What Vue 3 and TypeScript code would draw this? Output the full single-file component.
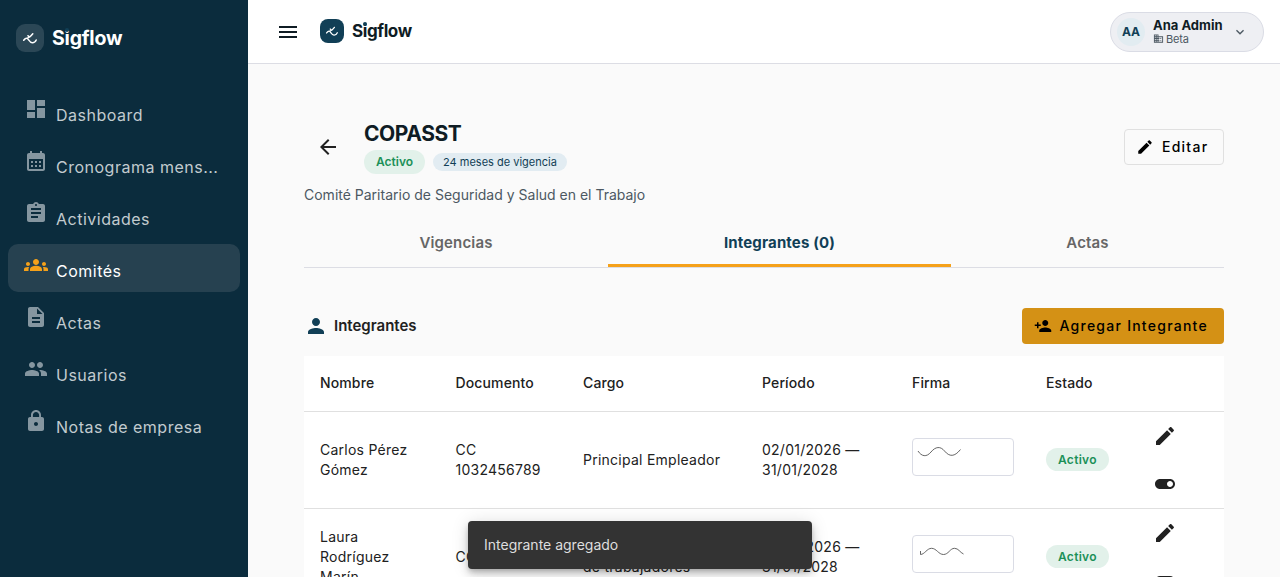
<script setup lang="ts">
interface NavItem {
  label: string
  icon: string
  active?: boolean
}
interface Member {
  name: string
  doc: string
  role: string
  period: string
  sign: string
}

const icons: Record<string, string> = {
  dashboard: 'M3 13h8V3H3v10zm0 8h8v-6H3v6zm10 0h8V11h-8v10zm0-18v6h8V3h-8z',
  calendar:
    'M19 4h-1V2h-2v2H8V2H6v2H5c-1.11 0-1.99.9-1.99 2L3 20c0 1.1.89 2 2 2h14c1.1 0 2-.9 2-2V6c0-1.1-.9-2-2-2zm0 16H5V10h14v10zM9 14H7v-2h2v2zm4 0h-2v-2h2v2zm4 0h-2v-2h2v2zm-8 4H7v-2h2v2zm4 0h-2v-2h2v2zm4 0h-2v-2h2v2z',
  assignment:
    'M19 3h-4.18C14.4 1.84 13.3 1 12 1c-1.3 0-2.4.84-2.82 2H5c-1.1 0-2 .9-2 2v14c0 1.1.9 2 2 2h14c1.1 0 2-.9 2-2V5c0-1.1-.9-2-2-2zm-7 0c.55 0 1 .45 1 1s-.45 1-1 1-1-.45-1-1 .45-1 1-1zm2 14H7v-2h7v2zm3-4H7v-2h10v2zm0-4H7V7h10v2z',
  groups:
    'M12 12.75c1.63 0 3.07.39 4.24.9 1.08.48 1.76 1.56 1.76 2.73V18H6v-1.61c0-1.18.68-2.26 1.76-2.73 1.17-.52 2.61-.91 4.24-.91zM4 13c1.1 0 2-.9 2-2s-.9-2-2-2-2 .9-2 2 .9 2 2 2zm1.13 1.1c-.37-.06-.74-.1-1.13-.1-.99 0-1.93.21-2.78.58C.48 14.9 0 15.62 0 16.43V18h4.5v-1.61c0-.83.23-1.61.63-2.29zM20 13c1.1 0 2-.9 2-2s-.9-2-2-2-2 .9-2 2 .9 2 2 2zm4 3.43c0-.81-.48-1.53-1.22-1.85-.85-.37-1.79-.58-2.78-.58-.39 0-.76.04-1.13.1.4.68.63 1.46.63 2.29V18H24v-1.57zM12 6c1.66 0 3 1.34 3 3s-1.34 3-3 3-3-1.34-3-3 1.34-3 3-3z',
  description:
    'M14 2H6c-1.1 0-1.99.9-1.99 2L4 20c0 1.1.89 2 1.99 2H18c1.1 0 2-.9 2-2V8l-6-6zm2 16H8v-2h8v2zm0-4H8v-2h8v2zm-3-5V3.5L18.5 9H13z',
  people:
    'M16 11c1.66 0 2.99-1.34 2.99-3S17.66 5 16 5c-1.66 0-3 1.34-3 3s1.34 3 3 3zm-8 0c1.66 0 2.99-1.34 2.99-3S9.66 5 8 5C6.34 5 5 6.34 5 8s1.34 3 3 3zm0 2c-2.33 0-7 1.17-7 3.5V19h14v-2.5c0-2.33-4.67-3.5-7-3.5zm8 0c-.29 0-.62.02-.97.05 1.16.84 1.97 1.97 1.97 3.45V19h6v-2.5c0-2.33-4.67-3.5-7-3.5z',
  lock: 'M18 8h-1V6c0-2.76-2.24-5-5-5S7 3.24 7 6v2H6c-1.1 0-2 .9-2 2v10c0 1.1.9 2 2 2h12c1.1 0 2-.9 2-2V10c0-1.1-.9-2-2-2zm-6 9c-1.1 0-2-.9-2-2s.9-2 2-2 2 .9 2 2-.9 2-2 2zm3.1-9H8.9V6c0-1.71 1.39-3.1 3.1-3.1 1.71 0 3.1 1.39 3.1 3.1v2z',
  menu: 'M3 18h18v-2H3v2zm0-5h18v-2H3v2zm0-7v2h18V6H3z',
  business:
    'M12 7V3H2v18h20V7H12zM6 19H4v-2h2v2zm0-4H4v-2h2v2zm0-4H4V9h2v2zm0-4H4V5h2v2zm4 12H8v-2h2v2zm0-4H8v-2h2v2zm0-4H8V9h2v2zm0-4H8V5h2v2zm10 12h-8v-2h2v-2h-2v-2h2v-2h-2V9h8v10zm-2-8h-2v2h2v-2zm0 4h-2v2h2v-2z',
  expand: 'M16.59 8.59L12 13.17 7.41 8.59 6 10l6 6 6-6z',
  back: 'M20 11H7.83l5.59-5.59L12 4l-8 8 8 8 1.41-1.41L7.83 13H20v-2z',
  edit: 'M3 17.25V21h3.75L17.81 9.94l-3.75-3.75L3 17.25zM20.71 7.04c.39-.39.39-1.02 0-1.41l-2.34-2.34c-.39-.39-1.02-.39-1.41 0l-1.83 1.83 3.75 3.75 1.83-1.83z',
  person:
    'M12 12c2.21 0 4-1.79 4-4s-1.79-4-4-4-4 1.79-4 4 1.79 4 4 4zm0 2c-2.67 0-8 1.34-8 4v2h16v-2c0-2.66-5.33-4-8-4z',
  personAdd:
    'M15 12c2.21 0 4-1.79 4-4s-1.79-4-4-4-4 1.79-4 4 1.79 4 4 4zm-9-2V7H4v3H1v2h3v3h2v-3h3v-2H6zm9 4c-2.67 0-8 1.34-8 4v2h16v-2c0-2.66-5.33-4-8-4z',
  toggle:
    'M17 7H7c-2.76 0-5 2.24-5 5s2.24 5 5 5h10c2.76 0 5-2.24 5-5s-2.24-5-5-5zm0 8c-1.66 0-3-1.34-3-3s1.34-3 3-3 3 1.34 3 3-1.34 3-3 3z',
}

const logoPath =
  'M7.700 16.300C9 14.500 10 14 11 14.300C12.800 14.800 13.200 18.500 16.300 18.700C18.400 18.800 19.500 17.600 20.200 16M12 11.700C13.200 13.200 14.200 12.800 15 11.800L16.800 9.700M11 14.300L14.200 12.700'

const nav: NavItem[] = [
  { label: 'Dashboard', icon: 'dashboard' },
  { label: 'Cronograma mens...', icon: 'calendar' },
  { label: 'Actividades', icon: 'assignment' },
  { label: 'Comités', icon: 'groups', active: true },
  { label: 'Actas', icon: 'description' },
  { label: 'Usuarios', icon: 'people' },
  { label: 'Notas de empresa', icon: 'lock' },
]

const columns: string[] = ['Nombre', 'Documento', 'Cargo', 'Período', 'Firma', 'Estado', '']

const members: Member[] = [
  {
    name: 'Carlos Pérez Gómez',
    doc: 'CC 1032456789',
    role: 'Principal Empleador',
    period: '02/01/2026 — 31/01/2028',
    sign: 'M5 12C8.500 17.500 13.500 18.500 18 13C22.500 7.500 27.500 7 31.500 12C36.500 18 41.500 18 47.500 10.500',
  },
  {
    name: 'Laura Rodríguez Marín',
    doc: 'CC 52345678',
    role: 'Representante\nde trabajadores',
    period: '02/01/2026 — 31/01/2028',
    sign: 'M7.500 15V18.500C11.500 18.500 14 12.300 18.500 12.300C23.500 12.300 25.500 18.500 30.500 18.500C35.500 18.500 37 12.300 41.500 12.300C45.500 12.300 47 16.500 50.500 18',
  },
]
</script>

<template>
  <div class="app">
    <aside class="sidebar">
      <div class="brand">
        <span class="mark">
          <svg viewBox="0 0 28 28"><path :d="logoPath" /></svg>
        </span>
        <span class="word">Sigflow</span>
      </div>
      <nav>
        <a v-for="n in nav" :key="n.label" class="item" :class="{ active: n.active }">
          <svg class="icon" viewBox="0 0 24 24"><path :d="icons[n.icon]" /></svg>
          <span>{{ n.label }}</span>
        </a>
      </nav>
    </aside>

    <div class="main">
      <header class="topbar">
        <svg class="icon menu" viewBox="0 0 24 24"><path :d="icons.menu" /></svg>
        <div class="brand small">
          <span class="mark">
            <svg viewBox="0 0 28 28"><path :d="logoPath" /></svg>
          </span>
          <span class="word">Sigflow</span>
        </div>
        <div class="user">
          <span class="avatar">AA</span>
          <div class="who">
            <strong>Ana Admin</strong>
            <span class="org"><svg viewBox="0 0 24 24"><path :d="icons.business" /></svg>Beta</span>
          </div>
          <svg class="chev" viewBox="0 0 24 24"><path :d="icons.expand" /></svg>
        </div>
      </header>

      <section class="page">
        <div class="head">
          <svg class="icon back" viewBox="0 0 24 24"><path :d="icons.back" /></svg>
          <div class="titles">
            <h1>COPASST</h1>
            <div class="chips">
              <span class="chip ok">Activo</span>
              <span class="chip info">24 meses de vigencia</span>
            </div>
          </div>
          <button class="btn outline">
            <svg viewBox="0 0 24 24"><path :d="icons.edit" /></svg><span>Editar</span>
          </button>
        </div>
        <p class="desc">Comité Paritario de Seguridad y Salud en el Trabajo</p>

        <div class="tabs">
          <div class="tab">Vigencias</div>
          <div class="tab on">Integrantes (0)</div>
          <div class="tab">Actas</div>
        </div>

        <div class="section">
          <svg class="icon" viewBox="0 0 24 24"><path :d="icons.person" /></svg>
          <h2>Integrantes</h2>
          <button class="btn add">
            <svg viewBox="0 0 24 24"><path :d="icons.personAdd" /></svg><span>Agregar Integrante</span>
          </button>
        </div>

        <div class="table">
          <div class="row header">
            <div v-for="(c, i) in columns" :key="i" class="cell">{{ c }}</div>
          </div>
          <div v-for="m in members" :key="m.name" class="row body">
            <div class="cell">{{ m.name }}</div>
            <div class="cell">{{ m.doc }}</div>
            <div class="cell role">{{ m.role }}</div>
            <div class="cell">{{ m.period }}</div>
            <div class="cell sign"><svg viewBox="0 0 100 36"><path :d="m.sign" /></svg></div>
            <div class="cell status"><span class="chip ok state">Activo</span></div>
            <div class="cell actions">
              <span><svg class="icon" viewBox="0 0 24 24"><path :d="icons.edit" /></svg></span>
              <span><svg class="icon" viewBox="0 0 24 24"><path :d="icons.toggle" /></svg></span>
            </div>
          </div>
        </div>
      </section>
    </div>

    <div class="toast">Integrante agregado</div>
  </div>
</template>

<style>
html,
body {
  overflow: hidden;
}
</style>

<style scoped>
* {
  box-sizing: border-box;
}
.app {
  display: flex;
  height: 577px;
  overflow: hidden;
  background: #fafafa;
  color: #212121;
  font-family: Inter, sans-serif;
}
svg {
  display: block;
  flex: none;
  fill: currentColor;
}
.icon {
  width: 24px;
  height: 24px;
}
.sidebar {
  width: 248px;
  flex: none;
  padding: 24px 8px;
  background: #0b2c3d;
}
.brand {
  display: flex;
  align-items: center;
  gap: 8px;
  height: 28px;
  margin-left: 8px;
  color: #fff;
}
.mark {
  width: 28px;
  height: 28px;
  border-radius: 9px;
  background: #2b4756;
  color: #fff;
}
.mark svg {
  width: 100%;
  height: 100%;
  fill: none;
  stroke: currentColor;
  stroke-width: 1.5;
  stroke-linecap: round;
  stroke-linejoin: round;
}
.word {
  position: relative;
  font-weight: 700;
  font-size: 19.5px;
  line-height: 28px;
  letter-spacing: -0.2px;
}
.word::after {
  content: '';
  position: absolute;
  left: 13px;
  top: 4px;
  width: 4px;
  height: 4px;
  border-radius: 50%;
  background: #113f56;
}
nav {
  display: flex;
  flex-direction: column;
  gap: 4px;
  margin-top: 36px;
}
.item {
  display: flex;
  height: 48px;
  padding: 9px 16px;
  gap: 8px;
  border-radius: 10px;
  color: #c2cbcf;
  font-size: 16px;
  line-height: 24px;
  letter-spacing: 0.5px;
  white-space: nowrap;
}
.item span {
  padding-top: 6px;
}
.item .icon {
  color: #8596a0;
}
.item.active {
  background: #264150;
  color: #fff;
}
.item.active .icon {
  color: #f5a11a;
}
.main {
  flex: 1;
  min-width: 0;
}
.topbar {
  display: flex;
  align-items: center;
  height: 64px;
  padding: 0 16px 0 28px;
  background: #fff;
  border-bottom: 1px solid #dcdde4;
  color: #0f1c24;
}
.brand.small {
  margin: -2px auto 0 20px;
  color: #0f1c24;
}
.small .mark {
  width: 24px;
  height: 24px;
  border-radius: 8px;
  background: #113f56;
}
.small .word {
  font-size: 17px;
  letter-spacing: -0.4px;
}
.small .word::after {
  left: 11px;
  top: 5px;
}
.user {
  display: flex;
  align-items: center;
  width: 154px;
  height: 40px;
  padding: 0 15px 0 6px;
  border: 1px solid #dadce5;
  border-radius: 20px;
  background: #eeeff3;
}
.avatar {
  width: 28px;
  height: 28px;
  border-radius: 50%;
  background: #e2ecf1;
  color: #113f56;
  font-size: 12px;
  font-weight: 700;
  line-height: 28px;
  text-align: center;
}
.who {
  margin-left: 8px;
}
.who strong {
  display: block;
  font-size: 13px;
  font-weight: 700;
  line-height: 14px;
}
.org {
  display: flex;
  align-items: center;
  gap: 2px;
  font-size: 11px;
  line-height: 14px;
  letter-spacing: -0.15px;
  color: #4c5862;
}
.org svg {
  width: 11px;
  height: 11px;
}
.chev {
  width: 16px;
  height: 16px;
  margin-left: auto;
  color: #4c5862;
}
.page {
  padding: 56px 56px 0;
}
.head {
  display: flex;
  align-items: center;
  height: 54px;
}
.back {
  margin: 0 24px 0 12px;
}
.titles {
  flex: 1;
}
h1 {
  margin: 0;
  padding-top: 1px;
  font-size: 21px;
  font-weight: 700;
  line-height: 26px;
  letter-spacing: -0.45px;
  color: #0f1c24;
}
.chips {
  display: flex;
  align-items: center;
  gap: 8px;
  margin-top: 3px;
}
.chip {
  display: inline-block;
  white-space: nowrap;
}
.ok {
  height: 24px;
  padding: 0 12px;
  border-radius: 12px;
  background: #e2f1ea;
  color: #1b9058;
  font-size: 12px;
  font-weight: 600;
  line-height: 24px;
}
.status {
  display: flex;
  height: 25px;
}
.state {
  height: 23px;
  line-height: 23px;
  letter-spacing: 0.3px;
}
.info {
  height: 18px;
  padding: 0 10px;
  border-radius: 9px;
  background: #e2ecf2;
  color: #113f56;
  font-size: 11px;
  line-height: 18px;
}
.btn {
  display: flex;
  align-items: center;
  height: 36px;
  padding: 0 15px 0 11px;
  gap: 8px;
  border: 0;
  border-radius: 4px;
  color: #000;
  font-family: inherit;
  font-size: 14px;
  font-weight: 500;
  letter-spacing: 1.25px;
}
.btn span {
  padding-bottom: 1px;
}
.btn svg {
  width: 18px;
  height: 18px;
}
.outline {
  width: 100px;
  border: 1px solid #e0e0e0;
  background: #fafafa;
}
.add {
  width: 202px;
  margin-left: auto;
  padding-left: 11.5px;
  background: #d49115;
}
.desc {
  margin: 11px 0 0;
  font-size: 14px;
  line-height: 20px;
  color: #4c5862;
}
.tabs {
  display: grid;
  grid-template-columns: 304px 343px 273px;
  grid-template-rows: 48px;
  height: 49px;
  margin-top: 14px;
  border-bottom: 1px solid #dcdde4;
}
.tab {
  height: 48px;
  color: #666;
  font-size: 15px;
  font-weight: 600;
  line-height: 48px;
  letter-spacing: 0.15px;
  text-align: center;
}
.tab.on {
  border-bottom: 3px solid #f5a11a;
  color: #113f56;
  font-weight: 700;
}
.section {
  display: flex;
  align-items: center;
  margin-top: 40px;
  height: 36px;
}
.section .icon {
  color: #113f56;
}
h2 {
  margin: 0 0 0 6px;
  padding-bottom: 2px;
  font-size: 15px;
  font-weight: 600;
}
.table {
  margin-top: 12px;
  background: #fff;
}
.row {
  display: grid;
  grid-template-columns: 135.5px 127.5px 179px 150px 134px 95px 99px;
  align-items: center;
  border-bottom: 1px solid #e0e0e0;
  font-size: 14px;
  line-height: 20px;
  letter-spacing: 0.25px;
}
.header {
  height: 56px;
  padding-bottom: 1px;
  font-weight: 500;
  letter-spacing: 0.13px;
}
.body {
  height: 97px;
}
.cell {
  padding: 0 16px;
}
.role {
  white-space: pre-line;
}
.sign svg {
  width: 102px;
  height: 38px;
  border: 1px solid #dadce5;
  border-radius: 4px;
  margin-top: -6px;
  fill: none;
  stroke: #555;
  stroke-width: 0.9;
}
.actions span {
  display: flex;
  width: 48px;
  height: 48px;
  align-items: center;
  justify-content: center;
}
.toast {
  position: absolute;
  left: 468px;
  top: 521px;
  width: 344px;
  height: 48px;
  padding: 0 16px;
  border-radius: 4px;
  background: #333;
  color: #dedede;
  font-size: 14px;
  line-height: 48px;
  box-shadow: 0 3px 5px -1px rgba(0, 0, 0, 0.2), 0 6px 10px rgba(0, 0, 0, 0.14), 0 1px 18px rgba(0, 0, 0, 0.12);
}
</style>
